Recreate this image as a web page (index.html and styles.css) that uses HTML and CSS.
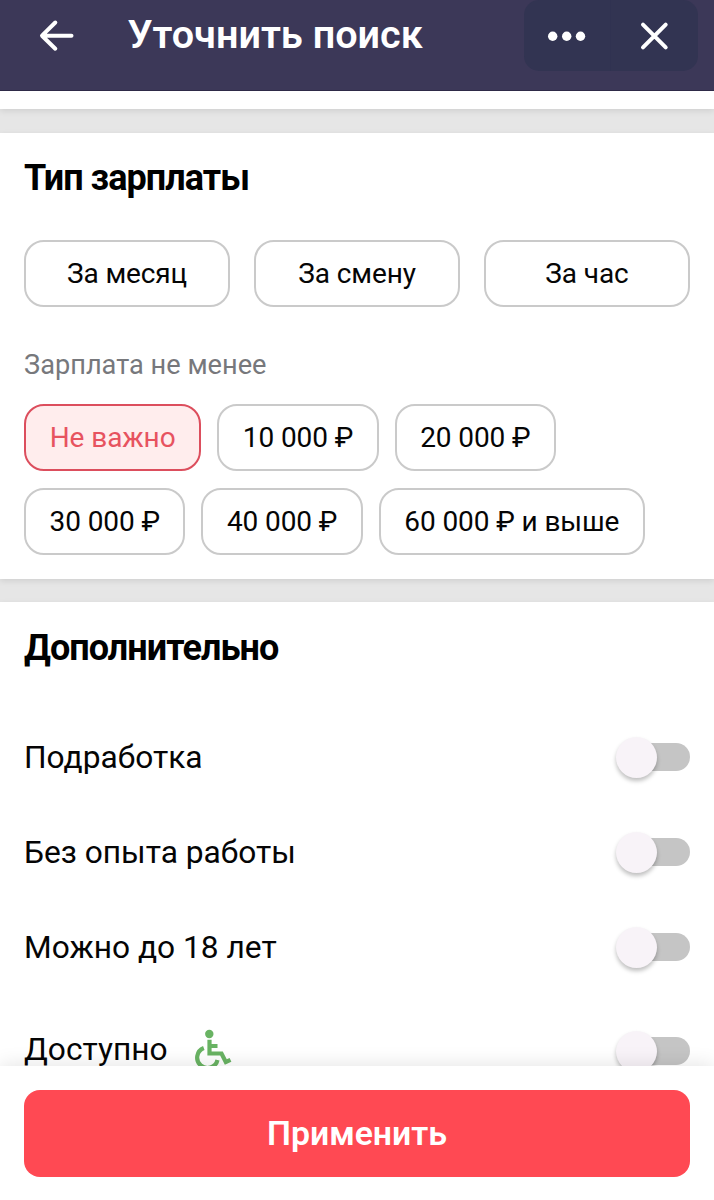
FILE: index.html
```html
<!DOCTYPE html>
<html lang="ru">
<head>
<meta charset="utf-8">
<title>Уточнить поиск</title>
<link rel="stylesheet" href="styles.css">
</head>
<body>
<div class="app">
  <header class="header">
    <svg class="back" width="36" height="34" viewBox="0 0 36 34"><path d="M16.300 3.500 3 16.700l13.300 13M3.500 16.700H32.500" /></svg>
    <h1 class="title">Уточнить поиск</h1>
    <div class="capsule">
      <div class="capsule-item"><svg width="86" height="71" viewBox="0 0 86 71"><circle cx="28.700" cy="36.300" r="4.700"/><circle cx="42.700" cy="36.300" r="4.700"/><circle cx="56.500" cy="36.300" r="4.700"/></svg></div>
      <div class="capsule-item"><svg width="87" height="71" viewBox="0 0 87 71"><path d="m32 24.600 22.700 22.700M54.700 24.600l-22.700 22.700"/></svg></div>
    </div>
  </header>
  <main class="content">
    <section class="card card-end"></section>
    <section class="card salary">
      <h2 class="heading">Тип зарплаты</h2>
      <div class="periods">
        <button class="chip">За месяц</button>
        <button class="chip">За смену</button>
        <button class="chip">За час</button>
      </div>
      <div class="label">Зарплата не менее</div>
      <div class="amounts">
        <button class="chip chip-active">Не важно</button>
        <button class="chip">10 000 ₽</button>
        <button class="chip">20 000 ₽</button>
        <button class="chip">30 000 ₽</button>
        <button class="chip">40 000 ₽</button>
        <button class="chip chip-wide">60 000 ₽ и выше</button>
      </div>
    </section>
    <section class="card extra">
      <h2 class="heading">Дополнительно</h2>
      <div class="row"><span>Подработка</span><span class="switch"><span class="knob"></span></span></div>
      <div class="row"><span>Без опыта работы</span><span class="switch"><span class="knob"></span></span></div>
      <div class="row"><span>Можно до 18 лет</span><span class="switch"><span class="knob"></span></span></div>
      <div class="row row-access"><span class="access">Доступно</span>
        <svg class="wheelchair" width="38" height="42" viewBox="0 0 38 42"><circle cx="14.300" cy="5" r="4.200"/><path d="M14.500 10.800v13.700h12l4.300 8.500 4.700-2.200M14.500 17h8M8.800 19A10.300 10.300 0 1 0 22.500 31"/></svg>
        <span class="switch"><span class="knob"></span></span></div>
    </section>
  </main>
  <footer class="footer"><button class="apply">Применить</button></footer>
</div>
</body>
</html>
```
FILE: styles.css
```css
* { box-sizing: border-box; }
body { margin: 0; font-family: Roboto, sans-serif; color: #050505; }
button { font: inherit; color: inherit; padding: 0; }
h1, h2 { margin: 0; }
.app { width: 714px; height: 1200px; display: flex; flex-direction: column; overflow: hidden; background: #e6e6e6; }
.header { flex: none; height: 91px; display: flex; align-items: flex-start; padding-left: 39px; padding-right: 16px; background: #3c3858; border-bottom: 1px solid #2e2a48; color: #fff; }
.back { margin-top: 19px; fill: none; stroke: #fff; stroke-width: 4; stroke-linecap: round; stroke-linejoin: round; }
.title { margin-left: 52.500px; margin-top: 11px; font-size: 39.600px; line-height: 48px; font-weight: 600; white-space: nowrap; }
.capsule { margin-left: auto; width: 174px; height: 71px; display: flex; border-radius: 15px; background: #323452; overflow: hidden; }
.capsule-item + .capsule-item { border-left: 1px solid #303251; }
.capsule svg { display: block; fill: #fff; stroke: none; }
.capsule path { fill: none; stroke: #fff; stroke-width: 4; stroke-linecap: round; }
.content { flex: 1; min-height: 0; overflow: hidden; display: flex; flex-direction: column; gap: 23.500px; }
.card { flex: none; background: #fff; padding: 0 24px; box-shadow: 0 2px 6px rgba(0, 0, 0, .1); }
.card-end { height: 18px; }
.salary { height: 446px; padding-top: 24.500px; }
.heading { font-size: 36px; line-height: 42px; font-weight: 700; letter-spacing: -.94px; color: #000; }
.periods { display: grid; grid-template-columns: repeat(3, 1fr); gap: 24px; margin-top: 41px; }
.chip { height: 67px; border: 2px solid #cacaca; border-radius: 20px; background: #fff; font-size: 28px; letter-spacing: -.1px; white-space: nowrap; }
.label { margin-top: 42px; height: 32px; line-height: 32px; font-size: 27.200px; color: #77787c; }
.amounts { display: flex; flex-wrap: wrap; gap: 16.700px 16px; margin-top: 22.900px; }
.amounts .chip { width: 161.400px; }
.amounts .chip-active { width: 177.300px; background: #ffeded; border-color: #dc4e5d; color: #e7535f; }
.amounts .chip-wide { width: 266px; }
.extra { height: 620px; padding-top: 24.500px; }
.row { height: 95px; display: flex; align-items: center; justify-content: space-between; font-size: 31.700px; }
.heading + .row { margin-top: 41px; }
.row-access { height: 113px; justify-content: flex-start; }
.access { padding-bottom: 4px; }
.row-access .switch { margin-left: auto; }
.wheelchair { margin-left: 27px; margin-bottom: 2px; fill: #69b363; }
.wheelchair path { fill: none; stroke: #69b363; stroke-width: 4.200; }
.switch { position: relative; width: 74px; height: 41px; }
.switch::before { content: ""; position: absolute; right: 0; top: 6.500px; width: 68px; height: 28px; border-radius: 14px; background: #c5c5c5; }
.knob { position: relative; display: block; width: 41px; height: 41px; border-radius: 50%; background: #f8f3f8; box-shadow: 0 3px 4px rgba(0, 0, 0, .25); }
.footer { flex: none; position: relative; height: 134px; padding: 24px; background: #fff; box-shadow: 0 -2px 18px rgba(0, 0, 0, .1); }
.apply { display: block; width: 100%; height: 87px; padding-bottom: 1px; border: 0; border-radius: 16px; background: #ff4953; color: #fff; font-size: 33.800px; font-weight: 600; }
```
